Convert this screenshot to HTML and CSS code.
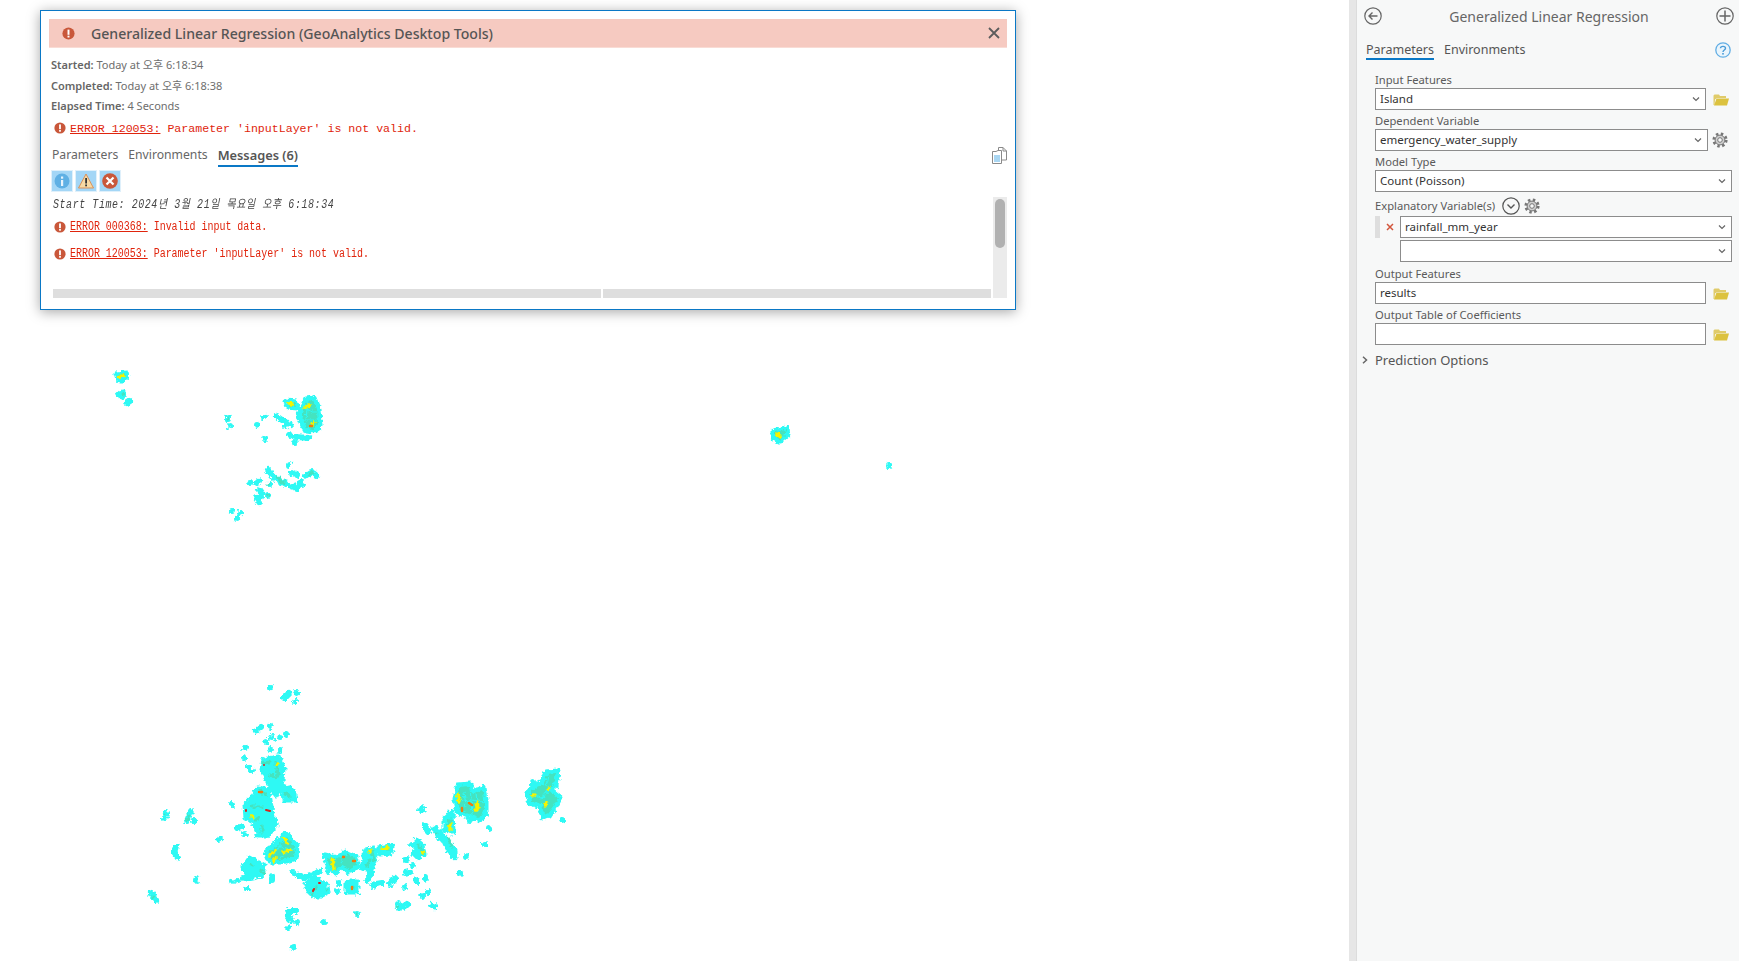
FILE: index.html
```html
<!DOCTYPE html>
<html lang="en">
<head>
  <meta charset="UTF-8">
  <title>Generalized Linear Regression</title>
  <link rel="stylesheet" href="styles.css">
</head>
<body>
  <svg class="defs" width="0" height="0">
    <symbol id="i-error" viewBox="0 0 12 12">
      <circle cx="6" cy="6" r="5.6" fill="#c9573a"/>
      <rect x="5.1" y="2.4" width="1.8" height="4.8" fill="#fff"/>
      <rect x="5.1" y="8" width="1.8" height="1.7" fill="#fff"/>
    </symbol>
    <symbol id="i-folder" viewBox="0 0 16 13">
      <path d="M0.5 12V2.5L1.5 1.5H6L7 3H13V5H4L2 6.5L1.5 12Z" fill="#e0cb6a"/>
      <path d="M1 12.5L3.5 5.5H16L14 12.5Z" fill="#dcc23f"/>
    </symbol>
    <symbol id="i-gear" viewBox="0 0 16 16">
      <circle cx="8" cy="8" r="6.1" fill="none" stroke="#777" stroke-width="3" stroke-dasharray="2.4 2.4"/>
      <circle cx="8" cy="8" r="4.9" fill="#cfcfcf" stroke="#777" stroke-width="1"/>
      <circle cx="8" cy="8" r="2.3" fill="#f7f8f8" stroke="#777" stroke-width="1"/>
    </symbol>
    <symbol id="i-chev" viewBox="0 0 8 6">
      <path d="M1 1.5L4 4.5L7 1.5" fill="none" stroke="#666" stroke-width="1.2"/>
    </symbol>
  </svg>

  <main class="map">
    <svg class="map-canvas" width="1349" height="961" viewBox="0 0 1349 961" fill="none" stroke-linecap="round" stroke-linejoin="round">
      <defs>
        <filter id="rough" filterUnits="userSpaceOnUse" x="0" y="0" width="1349" height="961">
          <feTurbulence type="fractalNoise" baseFrequency="0.28" numOctaves="2" seed="7"/>
          <feDisplacementMap in="SourceGraphic" scale="6" xChannelSelector="R" yChannelSelector="G"/>
        </filter>
        <path id="land" d="M119 396L123 394M127 403L130 401M228 418V419M230 426h0
          M257 425h0M264 417h0M265 439h0M232 511h0M240 513h0M237 518h0M289 465h0M250 483h0
          M276 416L282 420L291 425M286 424V426M290 435L296 437L309 438M295 443h0
          M268 470L275 478L285 484L297 488M291 473L297 475M306 476L312 472L317 476M300 482V484M302 485h0M270 484h0M257 483L259 481M260 490L262 493M268 495h0M256 497L260 503M261 497h0
          M270 688h0M284 698L289 693M297 693h0M295 702h0M256 731L261 727M270 726h0M266 742h0M272 738h0M280 738h0M286 734h0M271 749h0M280 751h0M245 748h0M244 758h0M248 767h0M252 771h0
          M245 834h0M237 828L242 826M272 876V880M238 881h0M247 889h0M232 882h0M244 878h0M245 866h0
          M166 813L165 818M191 811L187 821M194 821h0M176 846L174 853L177 857M196 880h0M151 893L156 900M219 839h0M232 804h0
          M293 873L300 876M303 878L312 876L319 871M328 872h0M339 882V884M337 891h0M357 914h0M324 922h0
          M288 911L296 911M288 916L291 920M297 922h0M288 928h0M293 947h0M422 808V809M425 826L428 832M437 832L439 837M398 904L399 909L407 904
          M405 873L410 872M395 878L390 884M382 883L376 884M367 882L370 874M373 886h0M405 887h0M425 877V879M416 879L417 882M422 896h0M428 893h0M432 905L434 907
          M470 821h0M489 828h0M485 844h0M466 856h0M460 873h0M426 826L428 831M434 829L440 836M420 810L423 809M414 853L418 857M412 845h0M406 860h0M413 865h0M533 782V784M562 820h0M889 466h0"/>
        <path id="blob" d="M116 374L126 373L127 377L122 381L118 380ZM119 393L124 392L122 397Z
          M306 399L314 398L319 410L320 425L316 431L305 430L301 420L298 415L303 405ZM286 401L296 402L297 408L288 407Z
          M264 760L278 757L283 768L282 782L276 795L268 782L262 770ZM280 785L293 790L295 800L285 800Z
          M258 788L268 790L270 800L272 815L276 825L268 835L258 835L255 822L246 818L245 805L252 798Z
          M285 833L297 845L296 858L282 862L270 862L266 852L278 842ZM250 858L264 866L262 875L248 878L243 868Z
          M325 855L337 858L345 852L356 857L358 866L348 872L342 866L335 873L328 866ZM366 850L374 848L375 860L372 870L362 868ZM378 848L392 846L390 853L380 854Z
          M306 884L316 879L325 884L328 892L318 897L309 893ZM347 882H357V892H347Z
          M458 785L470 784L474 792L484 788L486 800L486 812L480 820L468 816L458 812L455 800Z
          M445 818L452 812L453 832L445 830ZM440 832L455 850L455 858L448 850Z
          M546 772L558 771L556 785L550 790L560 798L556 806L550 815L543 818L540 806L530 803L527 792L534 786L542 782Z
          M773 431L787 428L788 435L780 442L773 437ZM416 840L422 845L424 855L417 853Z"/>
        <path id="core-fill" d="M118 375L125 374L121 379Z
          M307 401L313 400L317 410L318 424L315 429L306 428L303 419L301 415L305 406Z
          M287 402L295 403L296 407L289 406Z
          M285 836L295 846L294 857L282 860L272 860L268 852L279 844Z
          M327 857L336 860L345 854L355 858L356 865L348 870L342 864L335 870L329 865Z
          M459 787L469 786L473 794L483 790L484 800L484 811L479 818L469 814L459 810L457 800Z
          M547 774L556 773L554 784L548 790L558 798L554 805L548 813L544 815L542 804L532 801L530 793L536 788L544 784Z
          M775 432L785 430L786 434L780 440L775 436Z"/>
        <path id="veins" d="M304 408L312 412L318 412M308 400L306 420M302 420L316 420M285 838L276 852M278 846L294 850M285 850L280 860M470 786L472 815M458 800L470 802M472 800L484 802M340 856L342 866M548 790L540 800M778 432L782 438M548 776L546 786M534 795L545 798M464 792L466 806M476 792L478 812"/>
        <path id="core" d="M123 394h0M228 418h0M277 478L284 483M309 474L313 473M268 484h0M268 495h0M263 763L270 762M276 763L278 775M270 775L276 777M285 793L290 797M261 790L266 795M252 807L262 807M256 820L258 818
          M262 826L262 832M260 870L264 873M251 865h0M165 815h0M190 815L187 820M153 897h0M370 860L367 866M372 852L374 860M384 849L388 849M317 887L312 893M327 890h0M353 887h0M357 914h0M397 907h0M419 846L423 853M447 825L451 820M448 838L452 846M437 833h0"/>
        <path id="warm" d="M119 377L123 376M288 403L292 404M305 407L309 406M313 424L314 422M251 817H253M277 764H279M284 838L287 843M275 851L270 855M290 850L284 852M277 858L274 860M332 860L334 868M370 850V852M382 849L388 848M422 852H423M458 795L459 801M477 802L478 808M475 810H477M450 825V830M532 796L534 795M545 803L546 805M548 788H550M777 435L780 436"/>
      </defs>
      <g filter="url(#rough)">
        <use href="#land" stroke="#2ef9f4" stroke-width="6"/>
        <use href="#blob" stroke="#2ef9f4" stroke-width="5" fill="#2ef9f4"/>
        <use href="#core-fill" fill="#45e3c0"/>
        <use href="#veins" stroke="#2ef9f4" stroke-width="1.2"/>
        <use href="#core" stroke="#45e3c0" stroke-width="3"/>
        <use href="#warm" stroke="#f4f400" stroke-width="3.4"/>
      </g>
      <g stroke="#f07a10" stroke-width="2.4">
        <path d="M259 792H262M310 426H312M343 857H344M353 861H355M352 887V889M462 808V811M469 803L472 805"/>
      </g>
      <g stroke="#d9241c" stroke-width="2">
        <path d="M264 765h0M266 810L270 811M246 810V811M313 891L314 889M319 883H320"/>
      </g>
    </svg>

    <section class="dialog">
      <header class="dialog-head">
        <svg class="head-icon"><use href="#i-error"/></svg>
        <h2>Generalized Linear Regression (GeoAnalytics Desktop Tools)</h2>
        <svg class="close" viewBox="0 0 12 12"><path d="M1 1L11 11M11 1L1 11" stroke="#5c5c5c" stroke-width="1.8"/></svg>
      </header>

      <div class="info">
        <p><b>Started:</b> Today at 오후 6:18:34</p>
        <p><b>Completed:</b> Today at 오후 6:18:38</p>
        <p><b>Elapsed Time:</b> 4 Seconds</p>
      </div>

      <p class="top-error">
        <svg class="err-icon"><use href="#i-error"/></svg>
        <span><a>ERROR 120053:</a> Parameter 'inputLayer' is not valid.</span>
      </p>

      <div class="dialog-tabs">
        <span>Parameters</span>
        <span>Environments</span>
        <span class="active">Messages (6)</span>
        <svg class="copy" viewBox="0 0 15 17">
          <path d="M6.5 4.5V0.5H11L14.500 4V13H10" fill="#fff" stroke="#8a8a8a"/>
          <path d="M11 0.5V4H14.500" fill="none" stroke="#8a8a8a"/>
          <path d="M0.500 4.500H4L6 3.500H9.500V16.500H0.500Z" fill="#fff" stroke="#8a8a8a"/>
          <rect x="2" y="8" width="6" height="7" fill="#a9d6f2"/>
        </svg>
      </div>

      <div class="filters">
        <span class="filter">
          <svg viewBox="0 0 16 16"><circle cx="8" cy="8" r="7.500" fill="#5fb0e4"/><rect x="7" y="7" width="2.200" height="6" fill="#e8f4fc"/><rect x="7" y="3.500" width="2.200" height="2.200" fill="#e8f4fc"/></svg>
        </span>
        <span class="filter">
          <svg viewBox="0 0 16 16"><path d="M8 1L15.500 15H0.500Z" fill="#f6d9a4" stroke="#d9915a"/><rect x="7.200" y="5" width="1.800" height="5.500" fill="#333"/><rect x="7.200" y="11.500" width="1.800" height="1.800" fill="#333"/></svg>
        </span>
        <span class="filter">
          <svg viewBox="0 0 16 16"><circle cx="8" cy="8" r="7.800" fill="#c9573a"/><path d="M4.500 4.500L11.500 11.500M11.500 4.500L4.500 11.500" stroke="#fff" stroke-width="2.200"/></svg>
        </span>
      </div>

      <div class="messages">
        <div class="message-list">
          <p class="msg msg-start"><span>Start Time: 2024년 3월 21일 목요일 오후 6:18:34</span></p>
          <p class="msg msg-err">
            <svg class="err-icon"><use href="#i-error"/></svg>
            <span><a>ERROR 000368:</a> Invalid input data.</span>
          </p>
          <p class="msg msg-err">
            <svg class="err-icon"><use href="#i-error"/></svg>
            <span><a>ERROR 120053:</a> Parameter 'inputLayer' is not valid.</span>
          </p>
          <div class="hscroll"><i class="hs-a"></i><i class="hs-b"></i></div>
        </div>
        <div class="vscroll"><i></i></div>
      </div>
    </section>
  </main>

  <div class="splitter"></div>

  <aside class="pane">
    <div class="pane-head">
      <svg class="round-btn" viewBox="0 0 18 18"><circle cx="9" cy="9" r="8.200" fill="none" stroke="#666" stroke-width="1.200"/><path d="M13.500 9H5M8.500 5.500L5 9L8.500 12.500" fill="none" stroke="#666" stroke-width="1.400"/></svg>
      <h1>Generalized Linear Regression</h1>
      <svg class="round-btn" viewBox="0 0 18 18"><circle cx="9" cy="9" r="8.200" fill="none" stroke="#666" stroke-width="1.200"/><path d="M9 3.500V14.500M3.500 9H14.500" stroke="#666" stroke-width="1.500"/></svg>
    </div>

    <div class="pane-tabs">
      <span class="active">Parameters</span>
      <span>Environments</span>
      <svg class="help" viewBox="0 0 16 16"><circle cx="8" cy="8" r="7.200" fill="#eaf5fc" stroke="#62aee4" stroke-width="1.300"/><path d="M5.500 6.200C5.500 3.800 10.500 3.800 10.500 6.200C10.500 8 8 8 8 10" fill="none" stroke="#4a9cd8" stroke-width="1.400"/><rect x="7.200" y="11" width="1.600" height="1.600" fill="#4a9cd8"/></svg>
    </div>

    <form class="params">
      <label>Input Features</label>
      <div class="row">
        <div class="field w-folder">Island<svg class="chev"><use href="#i-chev"/></svg></div>
        <svg class="folder"><use href="#i-folder"/></svg>
      </div>

      <label>Dependent Variable</label>
      <div class="row">
        <div class="field w-gear">emergency_water_supply<svg class="chev"><use href="#i-chev"/></svg></div>
        <svg class="gear"><use href="#i-gear"/></svg>
      </div>

      <label>Model Type</label>
      <div class="row">
        <div class="field w-full">Count (Poisson)<svg class="chev"><use href="#i-chev"/></svg></div>
      </div>

      <div class="label-row">
        <label>Explanatory Variable(s)</label>
        <svg class="round-btn" viewBox="0 0 18 18"><circle cx="9" cy="9" r="8.200" fill="none" stroke="#555" stroke-width="1.200"/><path d="M5.500 7.500L9 11L12.500 7.500" fill="none" stroke="#555" stroke-width="1.400"/></svg>
        <svg class="gear"><use href="#i-gear"/></svg>
      </div>
      <div class="var-row">
        <span class="grip"></span>
        <svg class="remove" viewBox="0 0 8 8"><path d="M1 1L7 7M7 1L1 7" stroke="#d2553c" stroke-width="1.500"/></svg>
        <div class="field w-var">rainfall_mm_year<svg class="chev"><use href="#i-chev"/></svg></div>
      </div>
      <div class="var-row var-empty">
        <div class="field w-var"><svg class="chev"><use href="#i-chev"/></svg></div>
      </div>

      <label class="after-vars">Output Features</label>
      <div class="row">
        <div class="field w-folder">results</div>
        <svg class="folder"><use href="#i-folder"/></svg>
      </div>

      <label>Output Table of Coefficients</label>
      <div class="row">
        <div class="field w-folder"></div>
        <svg class="folder"><use href="#i-folder"/></svg>
      </div>
    </form>

    <div class="section-toggle">
      <svg viewBox="0 0 6 8"><path d="M1 0.800L4.500 4L1 7.200" fill="none" stroke="#666" stroke-width="1.500"/></svg>
      <span>Prediction Options</span>
    </div>
  </aside>
</body>
</html>
```

FILE: styles.css
```css
* {
  box-sizing: border-box;
}

body {
  margin: 0;
  height: 961px;
  display: flex;
  overflow: hidden;
  background: #fff;
  color: #555;
  font-family: "Noto Sans", "Noto Sans CJK KR", sans-serif;
}

p, h1, h2 {
  margin: 0;
  font-weight: normal;
}

.defs {
  position: absolute;
}

/* map area */
.map {
  position: relative;
  flex: 1;
}

.map-canvas {
  position: absolute;
  top: 0;
  left: 0;
}

.dialog {
  position: absolute;
  top: 10px;
  left: 40px;
  width: 976px;
  height: 300px;
  padding: 8px 8px 11px;
  background: #fff;
  border: 1.5px solid #0a78c6;
  box-shadow: 0 2px 12px rgba(0, 0, 0, 0.35);
  display: flex;
  flex-direction: column;
}

.dialog-head {
  height: 29px;
  flex: none;
  display: flex;
  align-items: center;
  background: #f6cac1;
  padding: 0 7px 0 13px;
  border-bottom: 1px solid #f9dcd5;
}

.head-icon {
  width: 13px;
  height: 13px;
  margin-right: 16px;
}

.dialog-head h2 {
  flex: 1;
  font-size: 14.100px;
  font-weight: 500;
  color: #555;
}

.close {
  width: 12px;
  height: 12px;
}

.info {
  padding: 7px 0 0 2px;
  font-size: 11px;
  color: #6e6e6e;
}

.info p {
  height: 20.500px;
  line-height: 20.500px;
}

.info b {
  font-weight: 600;
  color: #666;
}

.top-error {
  margin-top: 2px;
  padding-left: 5px;
  height: 19px;
  display: flex;
  align-items: center;
  white-space: pre;
  font-family: "Liberation Mono", monospace;
  font-size: 11.600px;
  color: #e0240c;
}

.top-error a,
.msg a {
  text-decoration: underline;
}

.err-icon {
  width: 12px;
  height: 12px;
  margin-right: 4px;
  flex: none;
}

.dialog-tabs {
  display: flex;
  align-items: center;
  gap: 10px;
  height: 25px;
  margin-top: 4px;
  padding-left: 3px;
  font-size: 12.200px;
  color: #666;
}

.dialog-tabs .active {
  font-size: 12.800px;
  font-weight: 600;
  color: #555;
  border-bottom: 2px solid #0a78c6;
  height: 21px;
  margin-top: 4px;
}

.copy {
  width: 15px;
  height: 17px;
  margin-left: auto;
  margin-top: 2px;
}

.filters {
  display: flex;
  gap: 4px;
  margin-top: 4px;
  padding-left: 3px;
}

.filter {
  width: 20px;
  height: 20px;
  padding: 2px;
  background: #a3d6f6;
  outline: 1px solid #dff0fb;
  display: flex;
}

.filter svg {
  width: 16px;
  height: 16px;
}

.messages {
  flex: 1;
  display: flex;
  gap: 2px;
  margin-top: 5px;
}

.message-list {
  flex: 1;
  display: flex;
  flex-direction: column;
  padding-left: 4px;
}

.msg {
  display: flex;
  align-items: center;
  white-space: pre;
  font-family: "Liberation Mono", "Noto Sans CJK KR", monospace;
  font-size: 12px;
  color: #e0240c;
}

.msg span {
  transform: scaleX(0.83);
  transform-origin: left center;
}

.msg-start {
  height: 14px;
  color: #444;
  font-style: italic;
  letter-spacing: 0.7px;
}

.msg-err {
  height: 18px;
  margin-top: 8px;
}

.msg-err + .msg-err {
  margin-top: 9px;
}

.msg-start + .msg-err {
  margin-top: 8px;
}

.msg-err .err-icon {
  margin-left: 1px;
}

.hscroll {
  margin-top: auto;
  height: 9px;
  display: flex;
  gap: 2px;
}

.hs-a {
  width: 548px;
  background: #dedede;
}

.hs-b {
  flex: 1;
  background: #dedede;
}

.vscroll {
  width: 14px;
  margin-top: 1px;
  padding: 2px;
  background: #ebebeb;
}

.vscroll i {
  display: block;
  height: 49px;
  background: #b1b1b1;
  border-radius: 5px;
}

.splitter {
  width: 8px;
  flex: none;
  background: #e6e6e6;
  border-right: 1px solid #dcdcdc;
}

/* geoprocessing pane */
.pane {
  width: 382px;
  flex: none;
  padding: 0 7px 0 9px;
  background: #f7f8f8;
  font-size: 12px;
}

.pane-head {
  height: 32px;
  margin: 0 -2px;
  display: flex;
  align-items: center;
  justify-content: space-between;
}

.pane-head h1 {
  font-size: 14px;
  color: #666;
}

.round-btn {
  width: 18px;
  height: 18px;
}

.pane-tabs {
  display: flex;
  align-items: flex-end;
  gap: 10px;
  height: 28px;
  font-size: 12.500px;
  color: #555;
}

.pane-tabs span {
  height: 18px;
  line-height: 16px;
  border-bottom: 2px solid transparent;
}

.pane-tabs .active {
  border-bottom-color: #0a78c6;
}

.help {
  width: 16px;
  height: 16px;
  margin: 0 1px 2px auto;
}

.params {
  padding-left: 9px;
  padding-top: 9px;
}

.params label {
  display: block;
  height: 16px;
  line-height: 16px;
  font-size: 11.200px;
  color: #5a5a5a;
  margin-top: 3px;
}

.row {
  display: flex;
  align-items: center;
  height: 22px;
}

.field {
  position: relative;
  height: 22px;
  line-height: 19px;
  padding-left: 4px;
  background: #fff;
  border: 1px solid #8c8c8c;
  font-size: 11.500px;
  color: #333;
}

.chev {
  position: absolute;
  right: 5px;
  top: 7px;
  width: 8px;
  height: 6px;
}

.w-folder {
  width: 331px;
}

.w-gear {
  width: 333px;
}

.w-full {
  width: 357px;
}

.w-var {
  width: 332px;
}

.folder {
  width: 16px;
  height: 13px;
  margin-left: 7px;
}

.gear {
  width: 16px;
  height: 16px;
  margin-left: 4px;
}

.label-row {
  display: flex;
  align-items: center;
  height: 22px;
  margin-top: 3px;
}

.params .label-row label {
  margin: 0 7px 0 0;
}

.var-row {
  display: flex;
  align-items: center;
  height: 22px;
  margin-top: -1px;
}

.var-empty {
  margin-top: 2px;
  padding-left: 25px;
}

.grip {
  width: 5px;
  height: 22px;
  background: #dedede;
}

.remove {
  width: 8px;
  height: 8px;
  margin: 0 6px;
}

.params .after-vars {
  margin-top: 4px;
}

.section-toggle {
  display: flex;
  align-items: center;
  height: 20px;
  margin-top: 5px;
  font-size: 13px;
  color: #555;
}

.section-toggle svg {
  width: 6px;
  height: 8px;
  margin: 0 7px 0 -4px;
}
```
